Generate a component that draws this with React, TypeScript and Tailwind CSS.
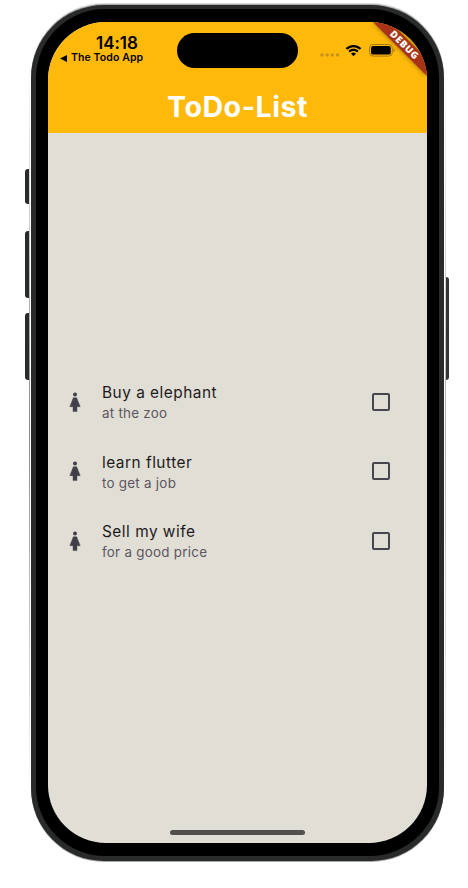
const todos = [
  { title: 'Buy a elephant', note: 'at the zoo' },
  { title: 'learn flutter', note: 'to get a job' },
  { title: 'Sell my wife', note: 'for a good price' },
];

function WomanIcon() {
  return (
    <svg className="mt-[1px] block h-[23px] w-[23px] shrink-0" viewBox="0 0 23 23" fill="#433f4a">
      <path d="M9.300 6.700h3.400l3.500 9h-3.200v4.900H9v-4.900H5.800z" stroke="#433f4a" strokeWidth=".4" strokeLinejoin="round" />
      <circle cx="11" cy="3.500" r="2" />
    </svg>
  );
}

function StatusBar() {
  return (
    <div className="flex h-[59px] items-start justify-between pr-[31px] pl-3">
      <div className="flex w-[84px] flex-col pt-[12px]">
        <span className="pl-[36px] text-[17px] leading-[18px] font-semibold tracking-[-0.050px] whitespace-nowrap">14:18</span>
        <span className="flex items-center text-[10.500px] leading-[12px] font-semibold tracking-[0.100px] whitespace-nowrap">
          <svg className="mr-[4px] block h-[7px] w-[7px]" viewBox="0 0 7 7">
            <path d="M0 3.500 7 0v7z" />
          </svg>
          The Todo App
        </span>
      </div>
      <div className="mt-[11px] ml-[11px] h-[35px] w-[121px] rounded-full bg-black" />
      <div className="mt-[22px] flex items-center">
        <svg className="mt-[8px] mr-[5px] block h-[4px] w-[20px]" viewBox="0 0 20 4" fill="#c9931a">
          <circle cx="2" cy="2" r="1.800" />
          <circle cx="7.200" cy="2" r="1.800" />
          <circle cx="12.400" cy="2" r="1.800" />
          <circle cx="17.600" cy="2" r="1.800" />
        </svg>
        <svg className="mr-[7px] block h-[13px] w-[17px]" viewBox="0 0 17 13">
          <path d="M8.500 3.200c2.300 0 4.400.9 6 2.400.1.100.3.100.4 0l1.200-1.200c.1-.1.1-.3 0-.4C12 0 5 0 .9 4c-.1.100-.1.300 0 .4l1.200 1.200c.1.100.3.100.4 0 1.600-1.500 3.700-2.400 6-2.400zM8.500 7c1.300 0 2.500.5 3.400 1.300.1.100.3.100.4 0l1.200-1.200c.1-.1.1-.3 0-.4-2.800-2.600-7.200-2.600-10 0-.1.100-.1.300 0 .4l1.200 1.200c.1.100.3.100.4 0C6 7.500 7.200 7 8.500 7zM10.900 9.800c.1-.1.1-.3 0-.4-1.400-1.200-3.400-1.200-4.800 0-.1.100-.1.300 0 .4l2.200 2.300c.1.100.3.100.4 0z" />
        </svg>
        <svg className="block h-[13px] w-[27px]" viewBox="0 0 27 13">
          <rect x=".5" y=".5" width="22.800" height="11.600" rx="3.600" fill="none" stroke="#a87a10" />
          <rect x="2" y="2" width="19.800" height="8.600" rx="2.200" />
          <path d="M24.500 4.300c1.800.6 1.800 3.400 0 4z" fill="#a87a10" />
        </svg>
      </div>
    </div>
  );
}

function DebugBanner() {
  return (
    <svg className="absolute top-0 right-0 h-[70px] w-[70px]" viewBox="0 0 70 70">
      <defs>
        <filter id="ribbonShade" x="-30%" y="-30%" width="160%" height="160%">
          <feGaussianBlur stdDeviation="2.500" />
        </filter>
      </defs>
      <path d="M16 0H33L70 37V54z" fill="#000" opacity=".45" filter="url(#ribbonShade)" />
      <path d="M16 0H33L70 37V54z" fill="#a93317" />
      <text
        transform="translate(47.400 23.200) rotate(45)"
        y="3.200"
        textAnchor="middle"
        fill="#fff"
        className="font-['Open_Sans'] text-[9.600px] font-extrabold tracking-[0.650px]"
      >
        DEBUG
      </text>
    </svg>
  );
}

function TodoRow({ title, note }: { title: string; note: string }) {
  return (
    <li className="flex h-[69.400px] items-center pr-[37px] pl-[15.500px]">
      <WomanIcon />
      <div className="ml-[15.500px] flex-1 pt-[2px]">
        <div className="text-[15.400px] leading-[22px] tracking-[0.500px] text-[#1d1b20]">{title}</div>
        <div className="text-[13.400px] leading-[19px] tracking-[0.260px] text-[#5b5661]">{note}</div>
      </div>
      <div className="h-[18px] w-[18px] rounded-[2px] border-2 border-[#49454f]" />
    </li>
  );
}

export default function App() {
  return (
    <div className="relative h-[888px] w-[468px] overflow-hidden bg-white pt-[5px] pl-[31px] font-['Inter','Liberation_Sans',sans-serif] text-black">
      <div className="absolute top-[169px] left-[25px] h-[35px] w-[4px] rounded-l-[3px] bg-[#292b2a]" />
      <div className="absolute top-[231px] left-[25px] h-[67px] w-[4px] rounded-l-[3px] bg-[#292b2a]" />
      <div className="absolute top-[313px] left-[25px] h-[67px] w-[4px] rounded-l-[3px] bg-[#292b2a]" />
      <div className="absolute top-[277px] left-[446px] h-[103px] w-[3px] rounded-r-[3px] bg-[#353535]" />
      <div className="absolute top-[60px] left-[29px] h-[740px] w-px bg-linear-to-b from-transparent via-[#888] to-transparent" />
      <div className="absolute top-[60px] left-[445px] h-[740px] w-px bg-linear-to-b from-transparent via-[#aaa] to-transparent" />
      <div className="h-[856px] w-[413px] rounded-[73px] bg-[#292a2a] px-[5px] pt-[4px] pb-[5px] shadow-[0_-1px_0_#aaa,0_-2px_0_#ddd,0_1px_0_#aaa]">
        <div className="h-full rounded-[69px] bg-black px-[12px] pt-[13px] pb-[13px]">
          <div className="relative flex h-[821px] w-[379px] flex-col overflow-hidden rounded-[58px] bg-[#e1ded6]">
            <header className="h-[111px] shrink-0 bg-[#ffb90b]">
              <StatusBar />
              <h1 className="pt-[9px] text-center text-[28.600px] leading-[34px] font-bold tracking-[0.500px] text-white">ToDo-List</h1>
            </header>
            <main className="flex flex-1 flex-col pt-[234.300px]">
              <ul>
                {todos.map((todo) => (
                  <TodoRow key={todo.title} {...todo} />
                ))}
              </ul>
            </main>
            <div className="mx-auto mb-[8px] h-[5px] w-[135px] rounded-full bg-[#51504d]" />
            <DebugBanner />
          </div>
        </div>
      </div>
    </div>
  );
}
